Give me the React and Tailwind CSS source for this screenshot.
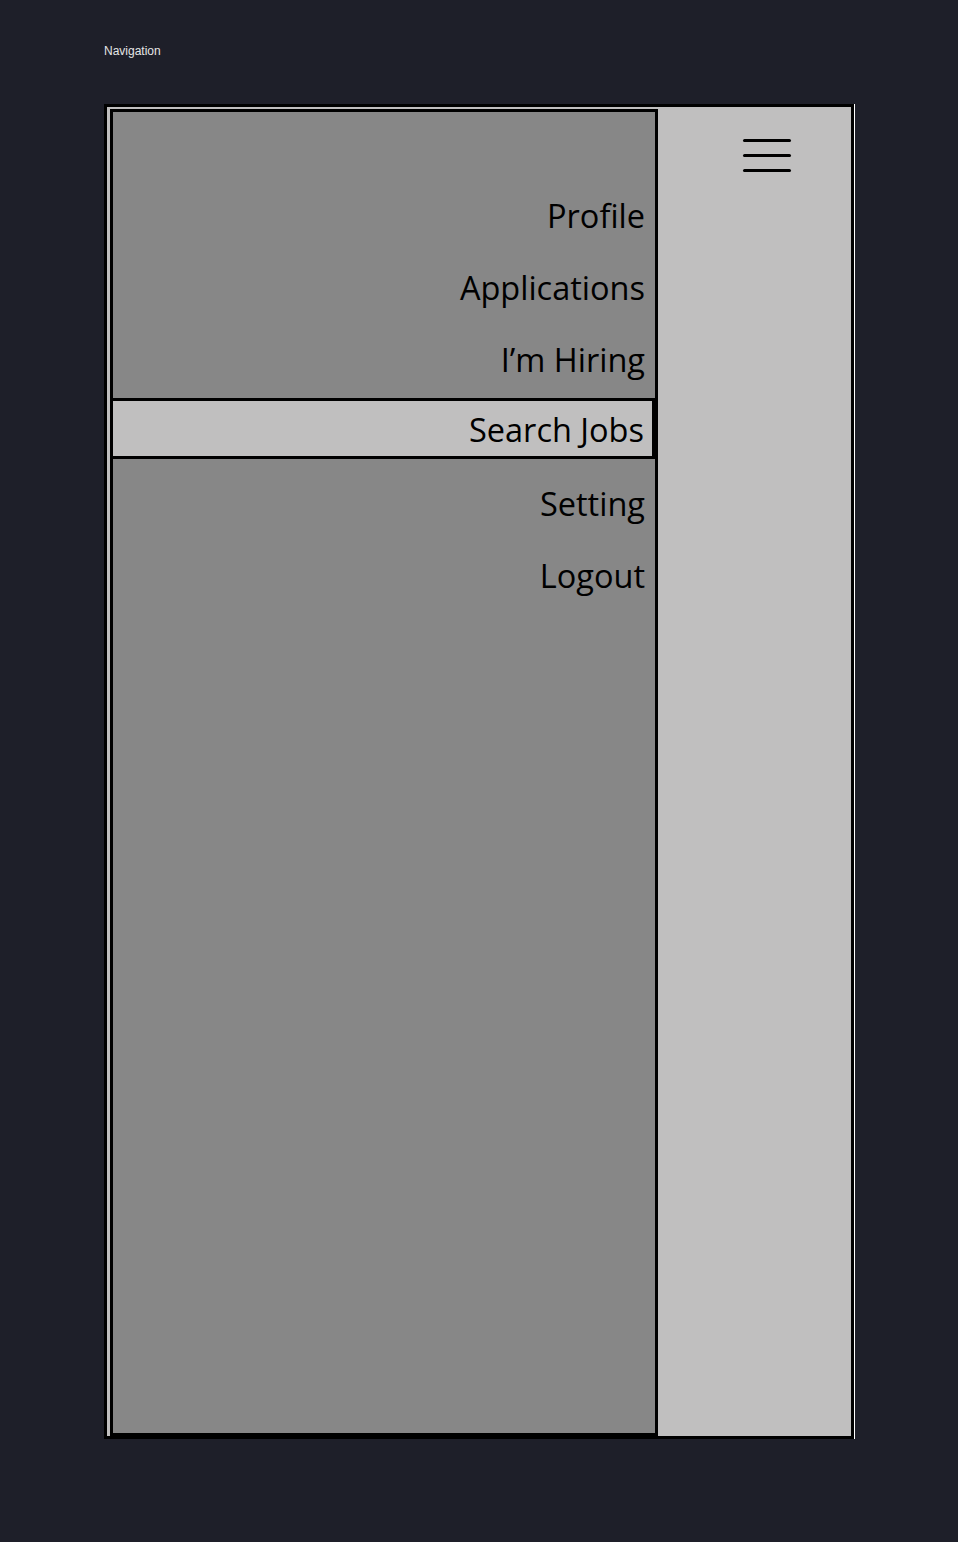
import React from 'react';

const items = ['Profile', 'Applications', 'I’m Hiring', 'Search Jobs', 'Setting', 'Logout'];
const active = 'Search Jobs';

const MenuItem = ({ label }) => {
    if (label === active) {
        return (
            <div className="h-[72px] pt-[2px]">
                <div className="-ml-[3px] h-[61px] border-[3px] border-black bg-[#c0bfbf] flex items-center justify-end pr-[8px] pt-[4px]">
                    {label}
                </div>
            </div>
        );
    }
    return (
        <div className="h-[72px] flex items-center justify-end pr-[10px]">
            {label}
        </div>
    );
};

const App = () => {
    return (
        <div className="min-h-[1542px] bg-[#1e1f29] pt-[44px] pl-[104px]" style={{ fontFamily: '"Liberation Sans", Arial, sans-serif' }}>
            <div className="text-[12px] leading-[14px] text-[#e5e5e5]">Navigation</div>

            <div className="mt-[46px] w-[750px] h-[1335px] border-[3px] border-black bg-[#c0bfbf] shadow-[1px_0_0_#ffffff] flex">
                <div
                    className="mt-[2px] ml-[3px] w-[548px] border-[3px] border-black bg-[#878787] pt-[68px] text-[32.5px] text-black"
                    style={{ fontFamily: '"Open Sans", "Noto Sans", sans-serif' }}
                >
                    {items.map(item => (
                        <MenuItem key={item} label={item} />
                    ))}
                </div>

                <div className="flex-1 flex justify-end pr-[60px] pt-[32px]">
                    <div className="w-[48px] flex flex-col gap-[12px]">
                        <span className="h-[3px] rounded-full bg-black" />
                        <span className="h-[3px] rounded-full bg-black" />
                        <span className="h-[3px] rounded-full bg-black" />
                    </div>
                </div>
            </div>
        </div>
    );
};

export default App;
